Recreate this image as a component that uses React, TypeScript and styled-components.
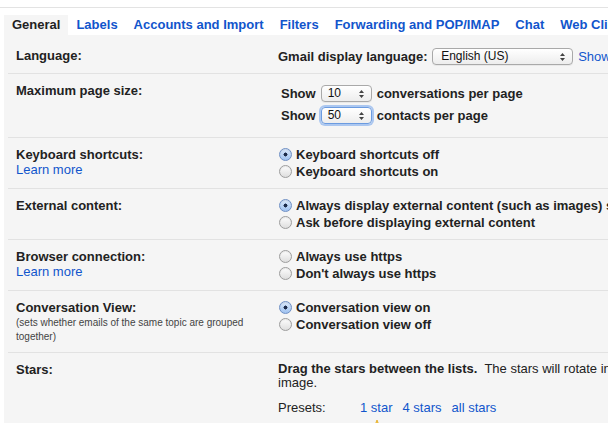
import React from 'react'
import styled, { createGlobalStyle } from 'styled-components'

const GlobalStyle = createGlobalStyle`
  body {
    margin: 0;
    overflow: hidden;
    background: #fff;
    font-family: 'Liberation Sans', Arial, sans-serif;
    font-size: 13px;
    color: #222;
  }
`

const Page = styled.div`
  width: 1100px;
  padding-top: 7px;
`

const TabBar = styled.div`
  display: flex;
  border-top: 1px solid #e3e3e3;
  padding: 7px 0 0 4px;
`

const Tab = styled.div<{ $active?: boolean }>`
  height: 20px;
  line-height: 20px;
  padding: 0 8px;
  font-weight: bold;
  white-space: nowrap;
  color: ${props => (props.$active ? '#222' : '#15c')};
  background: ${props => (props.$active ? '#f5f5f5' : 'transparent')};
`

const Panel = styled.div`
  margin-left: 4px;
  padding-left: 4px;
  background: #f5f5f5;
  height: 400px;
`

const Row = styled.div<{ $pad?: string }>`
  display: grid;
  grid-template-columns: 270px 1fr;
  padding: ${props => props.$pad || '8px 0'};
  border-bottom: 1px solid #e2e2e2;
`

const LabelCell = styled.div`
  padding-left: 8px;
`

const Label = styled.div<{ $lh?: number }>`
  font-weight: bold;
  line-height: ${props => props.$lh || 17}px;
`

const Link = styled.a`
  color: #15c;
  text-decoration: none;
  cursor: pointer;
`

const PlainLink = styled(Link)`
  font-weight: normal;
  margin-left: 4px;
`

const LearnMore = styled(Link)`
  display: block;
  line-height: 13px;
`

const Hint = styled.div`
  font-size: 10px;
  line-height: 14px;
  color: #444;
  width: 240px;
`

const ValueCell = styled.div`
  min-width: 0;
`

const InlineLine = styled.div<{ $h?: number }>`
  display: flex;
  align-items: center;
  height: ${props => props.$h || 22}px;
  white-space: nowrap;
  font-weight: bold;
`

const ShowLine = styled(InlineLine)`
  padding-left: 3px;
  gap: 4px;
`

const SelectBox = styled.div<{ $width: number; $focus?: boolean }>`
  position: relative;
  box-sizing: border-box;
  width: ${props => props.$width}px;
  height: 17px;
  margin: 0 1px;
  padding-left: ${props => (props.$width > 80 ? 8 : 6)}px;
  border: 1px solid ${props => (props.$focus ? '#6b9be0' : '#a9a9a9')};
  border-radius: 4px;
  background: linear-gradient(#ffffff, #ededed);
  box-shadow: ${props => (props.$focus ? '0 0 0 2px rgba(110, 160, 235, 0.55)' : '0 1px 0 rgba(0,0,0,0.05)')};
  font-weight: normal;
  font-size: 12px;
  line-height: 15px;
  color: #111;
`

const Arrows = styled.svg`
  position: absolute;
  right: 7px;
  top: 4px;
`

const Select = ({ value, width, focus }: { value: string; width: number; focus?: boolean }) => (
  <SelectBox $width={width} $focus={focus}>
    {value}
    <Arrows width="5" height="8" viewBox="0 0 5 8">
      <path d="M2.5 0 L5 3 L0 3 Z M2.5 8 L5 5 L0 5 Z" fill="#444" />
    </Arrows>
  </SelectBox>
)

const RadioLine = styled.label`
  display: flex;
  align-items: center;
  gap: 4px;
  height: 17px;
  padding-left: 1px;
  font-weight: bold;
  white-space: nowrap;
`

const RadioDot = styled.span<{ $on?: boolean }>`
  box-sizing: border-box;
  width: 13px;
  height: 13px;
  border-radius: 50%;
  border: 1px solid ${props => (props.$on ? '#6e8fc4' : '#9d9d9d')};
  background: ${props =>
    props.$on
      ? 'radial-gradient(circle at 50% 50%, #1c2b4a 0 1.8px, transparent 2.2px), linear-gradient(#dbe9fb, #9fc2f0)'
      : 'linear-gradient(#fdfdfd, #dedede)'};
  box-shadow: inset 0 1px 1px rgba(0, 0, 0, 0.08);
  flex-shrink: 0;
`

const Radio = ({ on, children }: { on?: boolean; children: React.ReactNode }) => (
  <RadioLine>
    <RadioDot $on={on} />
    {children}
  </RadioLine>
)

const StarsText = styled.div`
  line-height: 14px;
  white-space: nowrap;
  padding-top: 1px;
`

const Presets = styled.div`
  display: flex;
  align-items: center;
  margin-top: 9px;
  height: 16px;
`

const PresetLabel = styled.span`
  width: 82px;
`

const PresetLinks = styled.div`
  display: flex;
  gap: 10px;
`

const StarRow = styled.div`
  display: flex;
  align-items: center;
  height: 20px;
  margin-top: 2px;
  padding-left: 91px;
`

const Star = () => (
  <svg width="16" height="16" viewBox="0 0 16 16">
    <path d="M8 1 L10 6 L15 6.3 L11 9.5 L12.4 14.6 L8 11.7 L3.6 14.6 L5 9.5 L1 6.3 L6 6 Z" fill="#f7cb4d" stroke="#e2a820" strokeWidth="0.8" />
  </svg>
)

const tabs = ['General', 'Labels', 'Accounts and Import', 'Filters', 'Forwarding and POP/IMAP', 'Chat', 'Web Clips', 'Labs']

const App = () => {
  return (
    <Page>
      <GlobalStyle />
      <TabBar>
        {tabs.map((t, i) => (
          <Tab key={t} $active={i === 0}>
            {t}
          </Tab>
        ))}
      </TabBar>
      <Panel>
        <Row $pad="10px 0 6px">
          <LabelCell>
            <Label $lh={22}>Language:</Label>
          </LabelCell>
          <ValueCell>
            <InlineLine>
              Gmail display language:&nbsp;
              <Select value="English (US)" width={141} />
              <PlainLink>Show all language options</PlainLink>
            </InlineLine>
          </ValueCell>
        </Row>
        <Row $pad="8px 0 11px">
          <LabelCell>
            <Label $lh={18}>Maximum page size:</Label>
          </LabelCell>
          <ValueCell>
            <ShowLine>
              Show <Select value="10" width={51} /> conversations per page
            </ShowLine>
            <ShowLine>
              Show <Select value="50" width={51} focus /> contacts per page
            </ShowLine>
          </ValueCell>
        </Row>
        <Row>
          <LabelCell>
            <Label>Keyboard shortcuts:</Label>
            <LearnMore>Learn more</LearnMore>
          </LabelCell>
          <ValueCell>
            <Radio on>Keyboard shortcuts off</Radio>
            <Radio>Keyboard shortcuts on</Radio>
          </ValueCell>
        </Row>
        <Row>
          <LabelCell>
            <Label>External content:</Label>
          </LabelCell>
          <ValueCell>
            <Radio on>Always display external content (such as images) sent by trusted senders</Radio>
            <Radio>Ask before displaying external content</Radio>
          </ValueCell>
        </Row>
        <Row>
          <LabelCell>
            <Label>Browser connection:</Label>
            <LearnMore>Learn more</LearnMore>
          </LabelCell>
          <ValueCell>
            <Radio>Always use https</Radio>
            <Radio>Don't always use https</Radio>
          </ValueCell>
        </Row>
        <Row>
          <LabelCell>
            <Label>Conversation View:</Label>
            <Hint>(sets whether emails of the same topic are grouped together)</Hint>
          </LabelCell>
          <ValueCell>
            <Radio on>Conversation view on</Radio>
            <Radio>Conversation view off</Radio>
          </ValueCell>
        </Row>
        <Row>
          <LabelCell>
            <Label>Stars:</Label>
          </LabelCell>
          <ValueCell>
            <StarsText>
              <b>Drag the stars between the lists.</b>&nbsp; The stars will rotate in the order shown below when you
              click successively. To learn the name of a star for search, hover your mouse over the
              <br />
              image.
            </StarsText>
            <Presets>
              <PresetLabel>Presets:</PresetLabel>
              <PresetLinks>
                <Link>1 star</Link>
                <Link>4 stars</Link>
                <Link>all stars</Link>
              </PresetLinks>
            </Presets>
            <StarRow>
              <Star />
            </StarRow>
          </ValueCell>
        </Row>
      </Panel>
    </Page>
  )
}

export default App
